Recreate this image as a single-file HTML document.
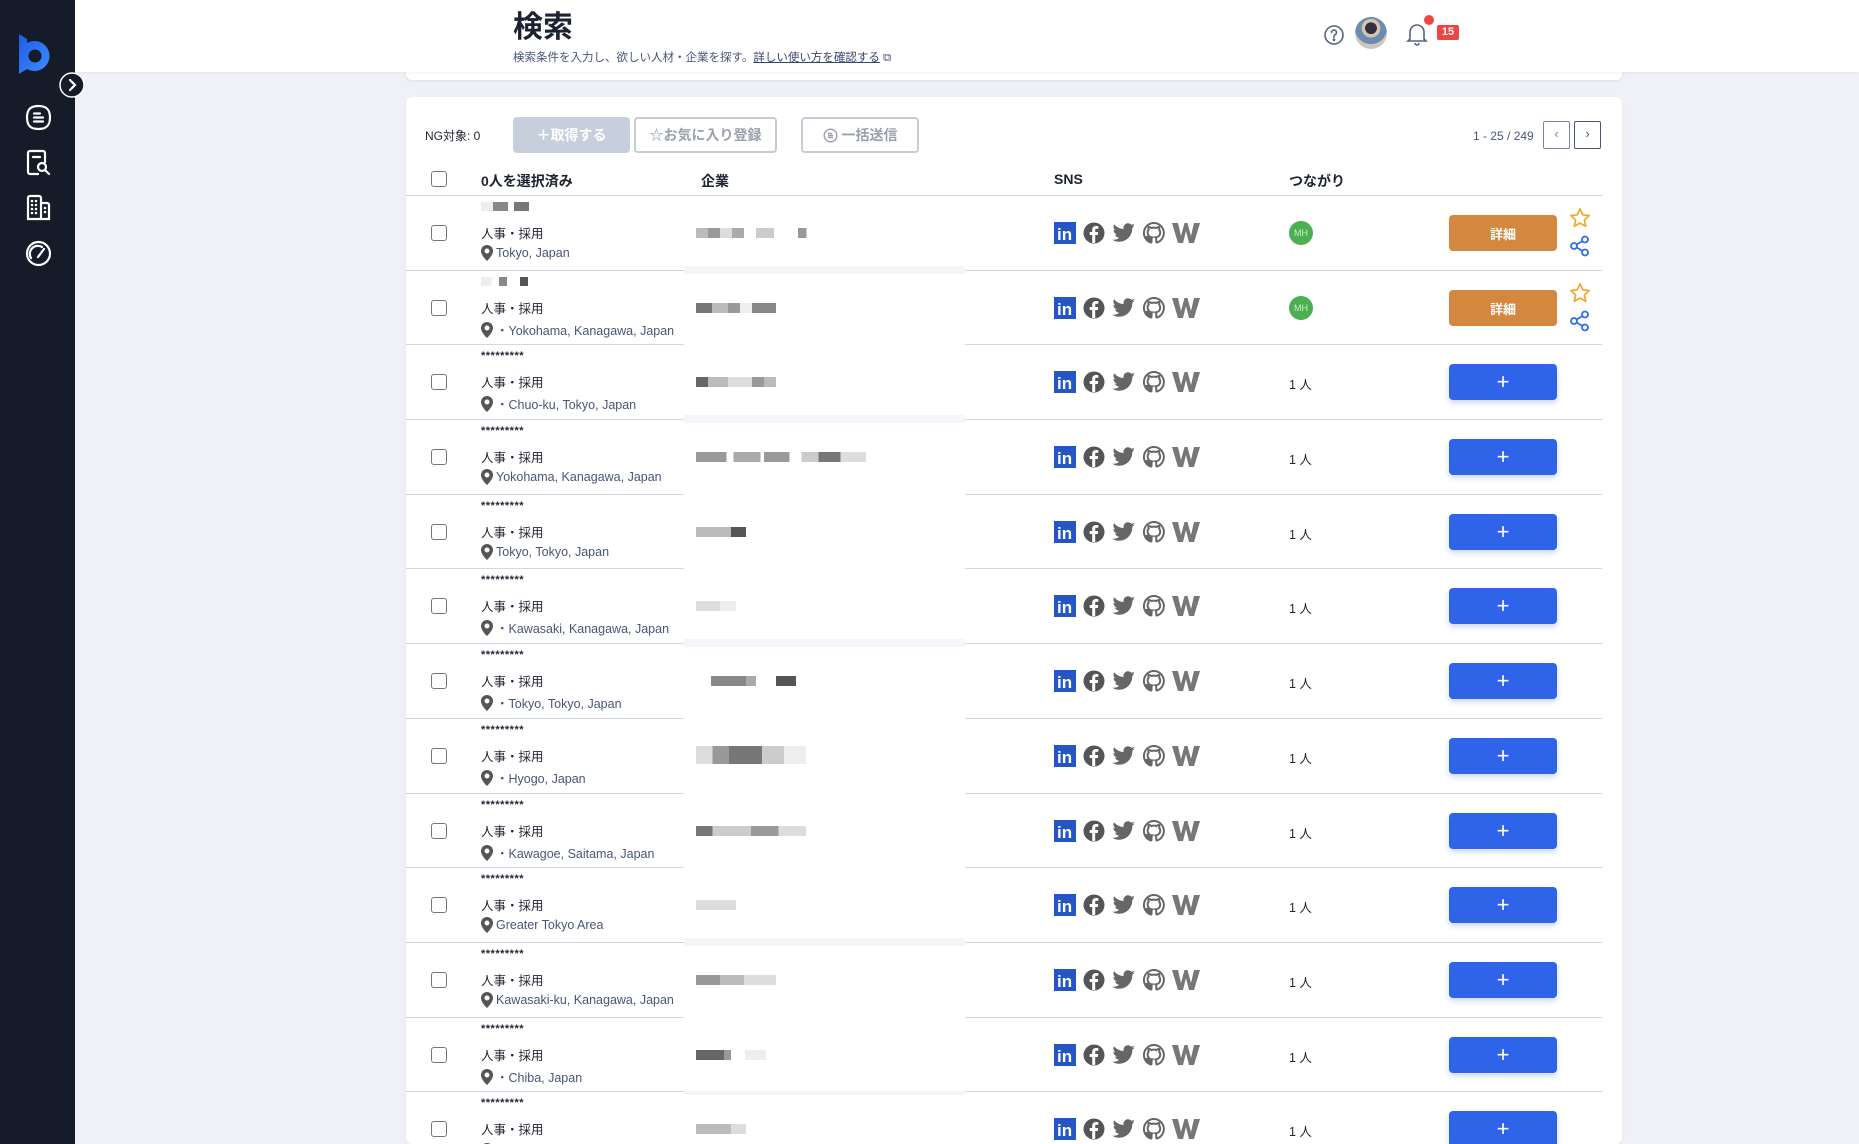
<!DOCTYPE html>
<html style="width:1859px;height:1144px;overflow:hidden"><head><meta charset="utf-8"><style>
*{box-sizing:border-box;margin:0;padding:0}
body{width:1859px;height:1144px;overflow:hidden;background:#eff1f6;font-family:"Liberation Sans","Noto Sans CJK JP",sans-serif;color:#1e2330;position:relative}
.abs{position:absolute}
#side{left:0;top:0;width:75px;height:1144px;background:#151b29;z-index:5}
#hdr{left:75px;top:0;width:1784px;height:72px;background:#fff;z-index:3;box-shadow:0 1px 3px rgba(0,0,0,.05)}
.card{background:#fff;border-radius:6px;left:406px;width:1216px}
.btn{height:36px;top:117px;border-radius:4px;font-size:14px;font-weight:bold;display:flex;align-items:center;justify-content:center;gap:4px}
.ob{border:2px solid #c7cbd3;color:#9aa0ac;background:#fff}
.row{position:absolute;left:406px;width:1216px;height:75px}
.line{position:absolute;height:1px;background:#d3d7e0;top:0}
.cb{position:absolute;left:25px;top:30px;width:16px;height:16px;border:1.5px solid #777;border-radius:3px;background:#fff}
.st{position:absolute;left:75px;top:6px;font-size:11px;font-weight:bold;letter-spacing:.5px}
.job{position:absolute;left:75px;top:28px;font-size:12.5px}
.loc{position:absolute;left:75px;top:50px;font-size:12.5px;color:#4a5578;display:flex;align-items:center;gap:3px}
.co{position:absolute;left:290px;top:33px;height:10px}
.sns{position:absolute;left:648px;top:27px;display:flex;gap:7px;align-items:center}
.cn{position:absolute;left:883px;top:30px;font-size:12.5px}
.mh{position:absolute;left:883px;top:26px;width:24px;height:24px;border-radius:50%;background:#4caf50;color:#c8f0c0;font-size:9px;display:flex;align-items:center;justify-content:center}
.add{position:absolute;left:1043px;top:20px;width:108px;height:36px;border-radius:4px;background:#3064e8;color:#fff;font-size:22px;display:flex;align-items:center;justify-content:center;box-shadow:0 3px 6px rgba(48,100,232,.25)}
.det{background:#d4873f;font-size:13px;font-weight:bold;box-shadow:none}
.ic{position:absolute;left:1163px}
.band{position:absolute;left:278px;width:281px;top:-4px;height:8px;background:#f4f5f8}
</style></head><body>
<div id="side" class="abs">
<svg class="abs" style="left:18px;top:34px" width="34" height="40" viewBox="0 0 34 40"><defs><linearGradient id="g" x1="0" y1="0" x2="1" y2="1"><stop offset="0" stop-color="#1c5ae8"/><stop offset="1" stop-color="#3f8cff"/></linearGradient></defs><path d="M1 0 L9 5 V9 A15 15 0 1 1 9 35 L1 40 Z" fill="url(#g)"/><circle cx="17" cy="22" r="6.5" fill="#151b29"/></svg>
<svg class="abs" style="left:25px;top:104px" width="27" height="27" viewBox="0 0 27 27" fill="none" stroke="#fff" stroke-width="2.2" stroke-linecap="round"><path d="M13.5 2 C21 2 25 5 25 13.5 C25 22 21 25 13.5 25 C6 25 2 22 2 13.5 C2 5 6 2 13.5 2Z"/><path d="M9 9.5h6M9 13.5h9M9 17.5h9"/></svg>
<svg class="abs" style="left:25px;top:149px" width="27" height="27" viewBox="0 0 27 27" fill="none" stroke="#fff" stroke-width="2.2" stroke-linecap="round"><path d="M13 25H5a2 2 0 0 1-2-2V4a2 2 0 0 1 2-2h13a2 2 0 0 1 2 2v9"/><path d="M8 8h7"/><circle cx="17" cy="18" r="4"/><path d="M20 21l4 4"/></svg>
<svg class="abs" style="left:25px;top:194px" width="27" height="27" viewBox="0 0 27 27" fill="none" stroke="#fff" stroke-width="2.2" stroke-linecap="round"><path d="M3 25V4a2 2 0 0 1 2-2h9a2 2 0 0 1 2 2v21zM16 9h6a2 2 0 0 1 2 2v14h-8"/><path d="M7 7v0M11 7v0M7 11v0M11 11v0M7 15v0M11 15v0M7 19v0M11 19v0M20 14v0M20 18v0" stroke-width="2.6"/></svg>
<svg class="abs" style="left:25px;top:240px" width="27" height="27" viewBox="0 0 27 27" fill="none" stroke="#fff" stroke-width="2.2" stroke-linecap="round"><circle cx="13.5" cy="13.5" r="11.5"/><path d="M6 18a8 8 0 0 1 11-11"/><path d="M13 17l6-8"/></svg>
</div>
<svg class="abs" style="left:59px;top:72px;z-index:6" width="26" height="26" viewBox="0 0 26 26"><circle cx="13" cy="13" r="12" fill="#151b29" stroke="#fff" stroke-width="1.5"/><path d="M11 8l5 5-5 5" fill="none" stroke="#fff" stroke-width="2.2" stroke-linecap="round"/></svg>
<div id="hdr" class="abs">
<div class="abs" style="left:438px;top:2px;font-size:30px;font-weight:bold;color:#1c2230">検索</div>
<div class="abs" style="left:438px;top:49px;font-size:11.5px;color:#4a5578">検索条件を入力し、欲しい人材・企業を探す。<span style="text-decoration:underline;color:#3a4570">詳しい使い方を確認する</span> ⧉</div>
<svg class="abs" style="left:1248px;top:24px" width="22" height="22" viewBox="0 0 22 22" fill="none" stroke="#5a6380" stroke-width="1.6"><circle cx="11" cy="11" r="9"/><path d="M8.5 8.5a2.5 2.5 0 1 1 3.5 2.3c-.7.4-1 .9-1 1.7v.8" stroke-linecap="round"/><circle cx="11" cy="15.8" r=".6" fill="#5a6380"/></svg>
<div class="abs" style="left:1280px;top:17px;width:32px;height:32px;border-radius:50%;background:radial-gradient(circle at 50% 35%,#2d3140 0 22%,#d8c4ae 23% 35%,#6b8cb0 36% 60%,#cfc6bb 61%)"></div>
<svg class="abs" style="left:1331px;top:22px" width="22" height="24" viewBox="0 0 22 24" fill="none" stroke="#5a6380" stroke-width="1.6"><path d="M4 17V10a7 7 0 0 1 14 0v7l2 2H2z"/><path d="M9 21a2 2 0 0 0 4 0"/></svg>
<div class="abs" style="left:1349px;top:15px;width:10px;height:10px;border-radius:50%;background:#ef4444"></div>
<div class="abs" style="left:1362px;top:25px;width:22px;height:15px;background:#ef4444;color:#fff;font-size:11px;font-weight:bold;border-radius:2px;text-align:center;line-height:15px">15</div>
</div>
<div class="abs card" style="top:40px;height:40px;box-shadow:0 1px 3px rgba(0,0,0,.08);z-index:1"></div>
<div class="abs card" style="top:97px;height:1047px;box-shadow:0 1px 3px rgba(0,0,0,.05);overflow:hidden"></div>
<div class="abs" style="left:425px;top:127px;font-size:12px">NG対象: 0</div>
<div class="abs btn" style="left:513px;width:117px;background:#c8cfdc;color:#fff">＋取得する</div>
<div class="abs btn ob" style="left:634px;width:143px">☆お気に入り登録</div>
<div class="abs btn ob" style="left:801px;width:118px"><svg width="15" height="15" viewBox="0 0 15 15" fill="none" stroke="#9aa0ac" stroke-width="1.4"><circle cx="7.5" cy="7.5" r="6.3"/><path d="M5 5.5h4M5 7.5h5M5 9.5h5"/></svg>一括送信</div>
<div class="abs" style="left:1473px;top:129px;font-size:12px;color:#4a5578">1 - 25 / 249</div>
<div class="abs" style="left:1543px;top:121px;width:27px;height:28px;border:1.5px solid #7a83a0;border-radius:2px;color:#7a83a0;font-size:13px;text-align:center;line-height:24px">‹</div>
<div class="abs" style="left:1574px;top:121px;width:27px;height:28px;border:1.5px solid #4a5578;border-radius:2px;color:#4a5578;font-size:13px;text-align:center;line-height:24px">›</div>
<div class="abs" style="left:431px;top:171px;width:16px;height:16px;border:1.5px solid #777;border-radius:3px"></div>
<div class="abs" style="left:481px;top:171px;font-size:14px;font-weight:bold">0人を選択済み</div>
<div class="abs" style="left:701px;top:171px;font-size:14px;font-weight:bold">企業</div>
<div class="abs" style="left:1054px;top:171px;font-size:14px;font-weight:bold">SNS</div>
<div class="abs" style="left:1289px;top:171px;font-size:14px;font-weight:bold">つながり</div>

<svg width="0" height="0" style="position:absolute"><defs>
<symbol id="li" viewBox="0 0 22 22"><rect width="22" height="22" fill="#2457c5"/><text x="3" y="18" font-family="Liberation Sans" font-weight="bold" font-size="17" fill="#fff">in</text></symbol>
<symbol id="fb" viewBox="0 0 22 22"><circle cx="11" cy="11" r="10.5" fill="#555"/><path d="M12.2 21V13h2.6l.4-3h-3V8.2c0-.9.3-1.4 1.5-1.4h1.6V4.1c-.3 0-1.2-.1-2.3-.1-2.3 0-3.8 1.4-3.8 3.9V10H6.7v3h2.5v8z" fill="#fff"/></symbol>
<symbol id="tw" viewBox="0 0 24 22"><path d="M23 3.5c-.8.4-1.7.6-2.6.7.9-.6 1.6-1.4 2-2.5-.9.5-1.9.9-2.9 1.1A4.6 4.6 0 0 0 11.6 7C7.8 6.8 4.4 5 2.1 2.2c-1.3 2.2-.5 4.9 1.4 6.2-.7 0-1.4-.2-2.1-.6 0 2.3 1.6 4.2 3.7 4.6-.7.2-1.4.2-2.1.1.6 1.9 2.3 3.2 4.3 3.2A9.3 9.3 0 0 1 0 17.6 13.1 13.1 0 0 0 7.1 19.7c8.5 0 13.2-7.1 13.2-13.2v-.6c.9-.7 1.7-1.5 2.3-2.4z" fill="#666"/></symbol>
<symbol id="gh" viewBox="0 0 22 22"><path d="M11 1a10 10 0 0 0-3.2 19.5c.5.1.7-.2.7-.5v-1.8c-2.8.6-3.4-1.3-3.4-1.3-.4-1.2-1.1-1.5-1.1-1.5-.9-.6.1-.6.1-.6 1 .1 1.5 1 1.5 1 .9 1.6 2.4 1.1 3 .9.1-.7.4-1.1.6-1.3-2.2-.3-4.6-1.1-4.6-5 0-1.1.4-2 1-2.7-.1-.3-.4-1.3.1-2.7 0 0 .8-.3 2.7 1a9.4 9.4 0 0 1 5 0c1.9-1.3 2.7-1 2.7-1 .5 1.4.2 2.4.1 2.7.6.7 1 1.6 1 2.7 0 3.9-2.4 4.7-4.6 5 .4.3.7.9.7 1.9V20c0 .3.2.6.7.5A10 10 0 0 0 11 1z" fill="none" stroke="#666" stroke-width="2"/></symbol>
<symbol id="wk" viewBox="0 0 28 22"><path d="M0 1h6l3 13 3.5-13h3L19 14l3-13h6l-6 20h-5L14 9l-3 12H6z" fill="#777"/></symbol>
<symbol id="pin" viewBox="0 0 12 16"><path d="M6 0a6 6 0 0 0-6 6c0 4.5 6 10 6 10s6-5.5 6-10a6 6 0 0 0-6-6zm0 8.5a2.5 2.5 0 1 1 0-5 2.5 2.5 0 0 1 0 5z" fill="#555"/></symbol>
</defs></svg>

<div class="row" style="top:195px"><div class="line" style="left:0;width:1196px"></div><div class="cb"></div><div class="st" style="top:7px"><span style="display:inline-block;width:60px;height:9px;background:linear-gradient(90deg,#eee 0 20%,#888 20% 45%,#fff 45% 55%,#777 55% 80%,#fff 80%)"></span></div><div class="job">人事・採用</div><div class="loc"><svg width="12" height="16"><use href="#pin"/></svg>Tokyo, Japan</div><div class="co" style="width:120px;background:linear-gradient(90deg,#bbb 0 10%,#999 10% 20%,#ddd 20% 30%,#aaa 30% 40%,#fff 40% 50%,#ccc 50% 65%,#fff 65% 85%,#999 85% 92%,#fff 92%)"></div><div class="sns"><svg width="22" height="22"><use href="#li"/></svg><svg width="22" height="22"><use href="#fb"/></svg><svg width="24" height="22"><use href="#tw"/></svg><svg width="22" height="22"><use href="#gh"/></svg><svg width="28" height="22"><use href="#wk"/></svg></div><div class="mh">MH</div><div class="add det">詳細</div><svg class="ic" style="top:12px" width="22" height="22" viewBox="0 0 24 24"><path d="M12 2l3 6.5 7 .8-5.2 4.8 1.4 7L12 17.6 5.8 21.1 7.2 14.1 2 9.3l7-.8z" fill="none" stroke="#f5a623" stroke-width="1.8" stroke-linejoin="round"/></svg><svg class="ic" style="top:40px" width="22" height="22" viewBox="0 0 22 22" fill="none" stroke="#2f6ee8" stroke-width="1.8"><circle cx="16" cy="4.5" r="3"/><circle cx="5" cy="11" r="3"/><circle cx="16" cy="17.5" r="3"/><path d="M7.6 9.5l5.8-3.4M7.6 12.5l5.8 3.4"/></svg></div>
<div class="row" style="top:270px"><div class="line" style="left:0;width:278px"></div><div class="band"></div><div class="line" style="left:559px;width:637px"></div><div class="cb"></div><div class="st" style="top:7px"><span style="display:inline-block;width:52px;height:9px;background:linear-gradient(90deg,#eee 0 20%,#fff 20% 35%,#888 35% 50%,#fff 50% 75%,#555 75% 90%,#fff 90%)"></span></div><div class="job">人事・採用</div><div class="loc"><svg width="12" height="16"><use href="#pin"/></svg>・Yokohama, Kanagawa, Japan</div><div class="co" style="width:80px;background:linear-gradient(90deg,#777 0 20%,#bbb 20% 40%,#999 40% 55%,#eee 55% 70%,#888 70%)"></div><div class="sns"><svg width="22" height="22"><use href="#li"/></svg><svg width="22" height="22"><use href="#fb"/></svg><svg width="24" height="22"><use href="#tw"/></svg><svg width="22" height="22"><use href="#gh"/></svg><svg width="28" height="22"><use href="#wk"/></svg></div><div class="mh">MH</div><div class="add det">詳細</div><svg class="ic" style="top:12px" width="22" height="22" viewBox="0 0 24 24"><path d="M12 2l3 6.5 7 .8-5.2 4.8 1.4 7L12 17.6 5.8 21.1 7.2 14.1 2 9.3l7-.8z" fill="none" stroke="#f5a623" stroke-width="1.8" stroke-linejoin="round"/></svg><svg class="ic" style="top:40px" width="22" height="22" viewBox="0 0 22 22" fill="none" stroke="#2f6ee8" stroke-width="1.8"><circle cx="16" cy="4.5" r="3"/><circle cx="5" cy="11" r="3"/><circle cx="16" cy="17.5" r="3"/><path d="M7.6 9.5l5.8-3.4M7.6 12.5l5.8 3.4"/></svg></div>
<div class="row" style="top:344px"><div class="line" style="left:0;width:278px"></div><div class="line" style="left:559px;width:637px"></div><div class="cb"></div><div class="st">*********</div><div class="job">人事・採用</div><div class="loc"><svg width="12" height="16"><use href="#pin"/></svg>・Chuo-ku, Tokyo, Japan</div><div class="co" style="width:80px;background:linear-gradient(90deg,#666 0 15%,#bbb 15% 40%,#ddd 40% 70%,#999 70% 85%,#bbb 85%)"></div><div class="sns"><svg width="22" height="22"><use href="#li"/></svg><svg width="22" height="22"><use href="#fb"/></svg><svg width="24" height="22"><use href="#tw"/></svg><svg width="22" height="22"><use href="#gh"/></svg><svg width="28" height="22"><use href="#wk"/></svg></div><div class="cn">1 人</div><div class="add">+</div></div>
<div class="row" style="top:419px"><div class="line" style="left:0;width:278px"></div><div class="band"></div><div class="line" style="left:559px;width:637px"></div><div class="cb"></div><div class="st">*********</div><div class="job">人事・採用</div><div class="loc"><svg width="12" height="16"><use href="#pin"/></svg>Yokohama, Kanagawa, Japan</div><div class="co" style="width:170px;background:linear-gradient(90deg,#999 0 18%,#fff 18% 22%,#aaa 22% 38%,#fff 38% 40%,#999 40% 55%,#fff 55% 62%,#ccc 62% 72%,#777 72% 85%,#ddd 85%)"></div><div class="sns"><svg width="22" height="22"><use href="#li"/></svg><svg width="22" height="22"><use href="#fb"/></svg><svg width="24" height="22"><use href="#tw"/></svg><svg width="22" height="22"><use href="#gh"/></svg><svg width="28" height="22"><use href="#wk"/></svg></div><div class="cn">1 人</div><div class="add">+</div></div>
<div class="row" style="top:494px"><div class="line" style="left:0;width:278px"></div><div class="line" style="left:559px;width:637px"></div><div class="cb"></div><div class="st">*********</div><div class="job">人事・採用</div><div class="loc"><svg width="12" height="16"><use href="#pin"/></svg>Tokyo, Tokyo, Japan</div><div class="co" style="width:50px;background:linear-gradient(90deg,#bbb 0 70%,#555 70%)"></div><div class="sns"><svg width="22" height="22"><use href="#li"/></svg><svg width="22" height="22"><use href="#fb"/></svg><svg width="24" height="22"><use href="#tw"/></svg><svg width="22" height="22"><use href="#gh"/></svg><svg width="28" height="22"><use href="#wk"/></svg></div><div class="cn">1 人</div><div class="add">+</div></div>
<div class="row" style="top:568px"><div class="line" style="left:0;width:278px"></div><div class="line" style="left:559px;width:637px"></div><div class="cb"></div><div class="st">*********</div><div class="job">人事・採用</div><div class="loc"><svg width="12" height="16"><use href="#pin"/></svg>・Kawasaki, Kanagawa, Japan</div><div class="co" style="width:40px;background:linear-gradient(90deg,#ddd 0 60%,#eee 60%)"></div><div class="sns"><svg width="22" height="22"><use href="#li"/></svg><svg width="22" height="22"><use href="#fb"/></svg><svg width="24" height="22"><use href="#tw"/></svg><svg width="22" height="22"><use href="#gh"/></svg><svg width="28" height="22"><use href="#wk"/></svg></div><div class="cn">1 人</div><div class="add">+</div></div>
<div class="row" style="top:643px"><div class="line" style="left:0;width:278px"></div><div class="band"></div><div class="line" style="left:559px;width:637px"></div><div class="cb"></div><div class="st">*********</div><div class="job">人事・採用</div><div class="loc"><svg width="12" height="16"><use href="#pin"/></svg>・Tokyo, Tokyo, Japan</div><div class="co" style="width:100px;background:linear-gradient(90deg,#fff 0 15%,#888 15% 50%,#aaa 50% 60%,#fff 60% 80%,#555 80%)"></div><div class="sns"><svg width="22" height="22"><use href="#li"/></svg><svg width="22" height="22"><use href="#fb"/></svg><svg width="24" height="22"><use href="#tw"/></svg><svg width="22" height="22"><use href="#gh"/></svg><svg width="28" height="22"><use href="#wk"/></svg></div><div class="cn">1 人</div><div class="add">+</div></div>
<div class="row" style="top:718px"><div class="line" style="left:0;width:278px"></div><div class="line" style="left:559px;width:637px"></div><div class="cb"></div><div class="st">*********</div><div class="job">人事・採用</div><div class="loc"><svg width="12" height="16"><use href="#pin"/></svg>・Hyogo, Japan</div><div class="co" style="top:28px;height:18px;width:110px;background:linear-gradient(90deg,#ddd 0 15%,#999 15% 30%,#777 30% 60%,#ccc 60% 80%,#eee 80%)"></div><div class="sns"><svg width="22" height="22"><use href="#li"/></svg><svg width="22" height="22"><use href="#fb"/></svg><svg width="24" height="22"><use href="#tw"/></svg><svg width="22" height="22"><use href="#gh"/></svg><svg width="28" height="22"><use href="#wk"/></svg></div><div class="cn">1 人</div><div class="add">+</div></div>
<div class="row" style="top:793px"><div class="line" style="left:0;width:278px"></div><div class="line" style="left:559px;width:637px"></div><div class="cb"></div><div class="st">*********</div><div class="job">人事・採用</div><div class="loc"><svg width="12" height="16"><use href="#pin"/></svg>・Kawagoe, Saitama, Japan</div><div class="co" style="width:110px;background:linear-gradient(90deg,#777 0 15%,#ccc 15% 50%,#999 50% 75%,#ddd 75%)"></div><div class="sns"><svg width="22" height="22"><use href="#li"/></svg><svg width="22" height="22"><use href="#fb"/></svg><svg width="24" height="22"><use href="#tw"/></svg><svg width="22" height="22"><use href="#gh"/></svg><svg width="28" height="22"><use href="#wk"/></svg></div><div class="cn">1 人</div><div class="add">+</div></div>
<div class="row" style="top:867px"><div class="line" style="left:0;width:278px"></div><div class="line" style="left:559px;width:637px"></div><div class="cb"></div><div class="st">*********</div><div class="job">人事・採用</div><div class="loc"><svg width="12" height="16"><use href="#pin"/></svg>Greater Tokyo Area</div><div class="co" style="width:40px;background:#ddd"></div><div class="sns"><svg width="22" height="22"><use href="#li"/></svg><svg width="22" height="22"><use href="#fb"/></svg><svg width="24" height="22"><use href="#tw"/></svg><svg width="22" height="22"><use href="#gh"/></svg><svg width="28" height="22"><use href="#wk"/></svg></div><div class="cn">1 人</div><div class="add">+</div></div>
<div class="row" style="top:942px"><div class="line" style="left:0;width:278px"></div><div class="band"></div><div class="line" style="left:559px;width:637px"></div><div class="cb"></div><div class="st">*********</div><div class="job">人事・採用</div><div class="loc"><svg width="12" height="16"><use href="#pin"/></svg>Kawasaki-ku, Kanagawa, Japan</div><div class="co" style="width:80px;background:linear-gradient(90deg,#999 0 30%,#bbb 30% 60%,#ddd 60%)"></div><div class="sns"><svg width="22" height="22"><use href="#li"/></svg><svg width="22" height="22"><use href="#fb"/></svg><svg width="24" height="22"><use href="#tw"/></svg><svg width="22" height="22"><use href="#gh"/></svg><svg width="28" height="22"><use href="#wk"/></svg></div><div class="cn">1 人</div><div class="add">+</div></div>
<div class="row" style="top:1017px"><div class="line" style="left:0;width:278px"></div><div class="line" style="left:559px;width:637px"></div><div class="cb"></div><div class="st">*********</div><div class="job">人事・採用</div><div class="loc"><svg width="12" height="16"><use href="#pin"/></svg>・Chiba, Japan</div><div class="co" style="width:70px;background:linear-gradient(90deg,#666 0 40%,#999 40% 50%,#fff 50% 70%,#eee 70%)"></div><div class="sns"><svg width="22" height="22"><use href="#li"/></svg><svg width="22" height="22"><use href="#fb"/></svg><svg width="24" height="22"><use href="#tw"/></svg><svg width="22" height="22"><use href="#gh"/></svg><svg width="28" height="22"><use href="#wk"/></svg></div><div class="cn">1 人</div><div class="add">+</div></div>
<div class="row" style="top:1091px;height:53px;overflow:hidden"><div class="line" style="left:0;width:278px"></div><div class="band"></div><div class="line" style="left:559px;width:637px"></div><div class="cb"></div><div class="st">*********</div><div class="job">人事・採用</div><div class="loc"><svg width="12" height="16"><use href="#pin"/></svg>日本 神奈川県 横浜</div><div class="co" style="width:50px;background:linear-gradient(90deg,#bbb 0 70%,#ddd 70%)"></div><div class="sns"><svg width="22" height="22"><use href="#li"/></svg><svg width="22" height="22"><use href="#fb"/></svg><svg width="24" height="22"><use href="#tw"/></svg><svg width="22" height="22"><use href="#gh"/></svg><svg width="28" height="22"><use href="#wk"/></svg></div><div class="cn">1 人</div><div class="add">+</div></div>
</body></html>
